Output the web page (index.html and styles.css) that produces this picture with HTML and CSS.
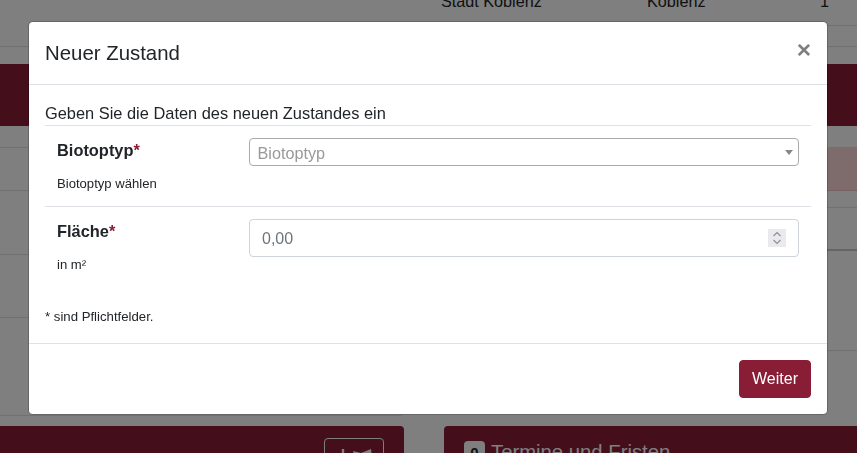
FILE: index.html
```html
<!DOCTYPE html>
<html lang="de">
<head>
<meta charset="utf-8">
<title>Neuer Zustand</title>
<link rel="stylesheet" href="styles.css">
</head>
<body>
<div class="page">
  <div class="top-table">
    <span class="cell-name">Stadt Koblenz</span>
    <span class="cell-kreis">Koblenz</span>
    <span class="cell-num">1</span>
  </div>
  <div class="top-gap"></div>
  <div class="band"></div>
  <div class="columns">
    <div class="col-left">
      <div class="left-row r1"></div>
      <div class="left-row r2"></div>
      <div class="left-row r3"></div>
      <div class="left-row r4"></div>
      <div class="left-row r5"></div>
    </div>
    <div class="col-right">
      <div class="right-row rr1"></div>
      <div class="right-row rr2"></div>
      <div class="right-row rr3"></div>
      <div class="right-row rr4"></div>
      <div class="right-row rr5"></div>
    </div>
  </div>
  <div class="cards">
    <div class="card card-left">
      <span class="outline-btn">
        <svg class="btn-icon" width="38" height="16" viewBox="0 0 38 16"><path d="M6 0v16" stroke="#fff" stroke-width="2.4" fill="none"/><path d="M16 2l8 2L34 0l1 8-7 8H19z" fill="#fff"/></svg>
      </span>
    </div>
    <div class="card card-right">
      <span class="badge">0</span>
      <span class="card-title">Termine und Fristen</span>
    </div>
  </div>
</div>

<div class="backdrop">
  <div class="modal">
    <div class="modal-header">
      <h5 class="modal-title">Neuer Zustand</h5>
      <span class="close">×</span>
    </div>
    <div class="modal-body">
      <div class="intro">Geben Sie die Daten des neuen Zustandes ein</div>
      <div class="form-row row-first">
        <div class="label-col">
          <div class="label">Biotoptyp<span class="req">*</span></div>
          <div class="help">Biotoptyp wählen</div>
        </div>
        <div class="select">
          <span class="placeholder">Biotoptyp</span>
          <span class="caret"></span>
        </div>
      </div>
      <div class="form-row row-second">
        <div class="label-col">
          <div class="label">Fläche<span class="req">*</span></div>
          <div class="help">in m²</div>
        </div>
        <div class="number">
          <span class="number-value">0,00</span>
          <span class="spinner">
            <svg width="18" height="18" viewBox="0 0 18 18"><path d="M5.500 7L9 3.500 12.500 7M5.500 11L9 14.500 12.500 11" fill="none" stroke="#8d8d93" stroke-width="1.1"/></svg>
          </span>
        </div>
      </div>
      <div class="note">* sind Pflichtfelder.</div>
    </div>
    <div class="modal-footer">
      <button class="btn-next" type="button">Weiter</button>
    </div>
  </div>
</div>
</body>
</html>
```
FILE: styles.css
```css
* { box-sizing: border-box; }
html, body { margin: 0; padding: 0; height: 100%; overflow: hidden; }
body {
  background: #fff;
  color: #212529;
  font-family: "Liberation Sans", Arial, sans-serif;
  font-size: 16.4px;
  line-height: 1.5;
  position: relative;
}
.page { width: 857px; height: 453px; overflow: hidden; }

/* Page behind the dialog */
.top-table {
  height: 26px;
  margin-left: 430px;
  display: flex;
  align-items: flex-end;
  padding: 0 0 12px 11px;
  border-bottom: 1px solid #dee2e6;
  font-size: 16.2px;
  line-height: 24px;
  white-space: nowrap;
  overflow: hidden;
}
.cell-name { width: 206px; flex: none; }
.cell-kreis { width: 173px; flex: none; }
.top-gap { height: 21px; border-bottom: 1px solid #dee2e6; }
.band { height: 62px; margin-top: 17px; background: #881d35; }
.columns { display: grid; grid-template-columns: 404px 1fr; column-gap: 40px; }
.col-left { height: 290px; }
.left-row { border-bottom: 1px solid #dee2e6; }
.r1 { height: 22px; }
.r2 { height: 43px; }
.r3 { height: 64px; }
.r4 { height: 63px; }
.r5 { height: 98px; border-bottom-right-radius: 4px; }
.right-row { border-bottom: 1px solid #dee2e6; }
.rr1 { height: 22px; }
.rr2 { height: 43px; background: #fcd9d9; border-bottom-color: #f0c0c0; }
.rr3 { height: 17px; }
.rr4 { height: 43px; border-bottom-color: #c4c8cc; border-bottom-width: 2px; }
.rr5 { height: 100px; }
.cards { display: grid; grid-template-columns: 404px 1fr; column-gap: 40px; margin-top: 10px; }
.card { height: 80px; background: #881d35; color: #fff; }
.card-left { border-radius: 0 4px 0 0; padding: 12px 20px 0 0; display: flex; justify-content: flex-end; }
.outline-btn {
  width: 60px; height: 38px;
  border: 1px solid #fff;
  border-radius: 4px;
  padding: 10px 0 0 12px;
}
.btn-icon { display: block; }
.card-right { border-radius: 4px 0 0 0; padding: 11px 0 0 20px; display: flex; align-items: flex-start; font-size: 20.3px; line-height: 30px; }
.badge {
  width: 21px; height: 24px;
  margin: 4px 6px 0 0;
  background: #fff;
  color: #212529;
  border-radius: 4px;
  font-size: 15px;
  font-weight: 700;
  line-height: 24px;
  text-align: center;
}

/* Dialog */
.backdrop {
  position: fixed;
  inset: 0;
  background: rgba(0, 0, 0, .5);
  padding: 21px 29px 0 28px;
}
.modal {
  width: 800px;
  height: 394px;
  background: #fff;
  border: 1px solid rgba(0, 0, 0, .2);
  border-radius: 4.8px;
  background-clip: padding-box;
  display: flex;
  flex-direction: column;
}
.modal-header {
  height: 63px;
  flex: none;
  display: flex;
  justify-content: space-between;
  padding: 16px 16px 0;
  border-bottom: 1px solid #dee2e6;
}
.modal-title { margin: 0; font-size: 20.4px; font-weight: 400; line-height: 30px; }
.close {
  font-size: 24.6px;
  font-weight: 700;
  line-height: 24px;
  color: #7f7f7f;
}
.modal-body { flex: 1; padding: 17px 16px 0; }
.intro { height: 23px; line-height: 23px; }
.form-row {
  display: flex;
  padding: 12px 12px 0;
  border-top: 1px solid #dee2e6;
}
.row-first { height: 81px; }
.row-second { height: 81px; }
.label-col { width: 192px; flex: none; }
.label { font-weight: 700; line-height: 24px; }
.req { color: #881d35; }
.help { margin-top: 12px; font-size: 13.1px; line-height: 19px; }
.select {
  width: 550px;
  height: 28px;
  border: 1px solid #aaa;
  border-radius: 4px;
  padding-left: 7.5px;
  display: flex;
  align-items: center;
  justify-content: space-between;
  line-height: 28px;
}
.placeholder { color: #999; font-size: 16.2px; padding-top: 2px; }
.caret {
  width: 0; height: 0;
  margin-right: 5px;
  border-style: solid;
  border-width: 5px 4px 0;
  border-color: #888 transparent transparent;
}
.number {
  width: 550px;
  height: 38px;
  border: 1px solid #ced4da;
  border-radius: 4px;
  padding: 0 12px;
  display: flex;
  align-items: center;
  justify-content: space-between;
  color: #6c757d;
  font-size: 16px;
}
.number-value { padding-top: 1px; }
.spinner { width: 18px; height: 18px; background: #e9e9ee; display: block; }
.spinner svg { display: block; }
.note { font-size: 13.2px; line-height: 19px; margin-top: 20px; }
.modal-footer {
  height: 71px;
  flex: none;
  border-top: 1px solid #dee2e6;
  padding: 16px 16px 0;
  display: flex;
  justify-content: flex-end;
  align-items: flex-start;
}
.btn-next {
  width: 72px;
  height: 38px;
  border: 1px solid #881d35;
  border-radius: 4px;
  background: #881d35;
  color: #fff;
  font: 16px/24px "Liberation Sans", Arial, sans-serif;
  padding: 0;
}
```
